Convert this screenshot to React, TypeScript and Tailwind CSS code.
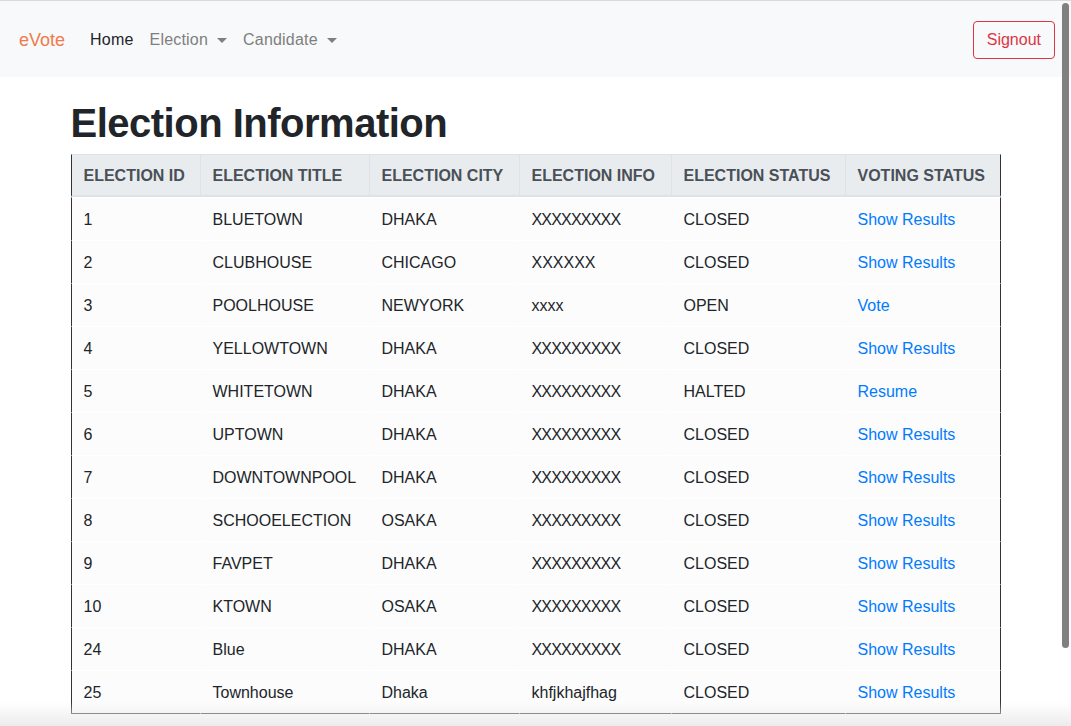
const elections = [
  { id: 1, title: "BLUETOWN", city: "DHAKA", info: "XXXXXXXXX", status: "CLOSED", action: "Show Results" },
  { id: 2, title: "CLUBHOUSE", city: "CHICAGO", info: "XXXXXX", status: "CLOSED", action: "Show Results" },
  { id: 3, title: "POOLHOUSE", city: "NEWYORK", info: "xxxx", status: "OPEN", action: "Vote" },
  { id: 4, title: "YELLOWTOWN", city: "DHAKA", info: "XXXXXXXXX", status: "CLOSED", action: "Show Results" },
  { id: 5, title: "WHITETOWN", city: "DHAKA", info: "XXXXXXXXX", status: "HALTED", action: "Resume" },
  { id: 6, title: "UPTOWN", city: "DHAKA", info: "XXXXXXXXX", status: "CLOSED", action: "Show Results" },
  { id: 7, title: "DOWNTOWNPOOL", city: "DHAKA", info: "XXXXXXXXX", status: "CLOSED", action: "Show Results" },
  { id: 8, title: "SCHOOELECTION", city: "OSAKA", info: "XXXXXXXXX", status: "CLOSED", action: "Show Results" },
  { id: 9, title: "FAVPET", city: "DHAKA", info: "XXXXXXXXX", status: "CLOSED", action: "Show Results" },
  { id: 10, title: "KTOWN", city: "OSAKA", info: "XXXXXXXXX", status: "CLOSED", action: "Show Results" },
  { id: 24, title: "Blue", city: "DHAKA", info: "XXXXXXXXX", status: "CLOSED", action: "Show Results" },
  { id: 25, title: "Townhouse", city: "Dhaka", info: "khfjkhajfhag", status: "CLOSED", action: "Show Results" },
];

const headers = [
  "ELECTION ID",
  "ELECTION TITLE",
  "ELECTION CITY",
  "ELECTION INFO",
  "ELECTION STATUS",
  "VOTING STATUS",
];

function Caret() {
  return (
    <span className="ml-[9px] inline-block h-0 w-0 border-x-[5px] border-t-[5px] border-x-transparent border-t-[#7f7f7f] align-middle" />
  );
}

function Navbar() {
  return (
    <nav className="flex h-[77px] items-center border-t border-[#dadada] bg-[#f8f9fa] pt-[2px] pl-[19px] pr-[16px]">
      <a className="mr-[17px] text-[18px] text-[#ef7a4c]">eVote</a>
      <ul className="flex items-center text-[16px] tracking-[0.2px]">
        <li className="px-2 text-[#212529]">Home</li>
        <li className="px-2 text-[#7f7f7f]">
          Election
          <Caret />
        </li>
        <li className="px-2 text-[#7f7f7f]">
          Candidate
          <Caret />
        </li>
      </ul>
      <button className="ml-auto h-[38px] rounded-[4px] border border-[#dc3545] px-[13px] text-[16px] text-[#dc3545]">
        Signout
      </button>
    </nav>
  );
}

export default function App() {
  return (
    <div className="relative h-[726px] overflow-hidden bg-white font-['Liberation_Sans',Arial,sans-serif] text-[#212529]">
      <Navbar />

      <main className="mx-auto w-[960px] px-[15px]">
        <h1 className="mt-[22px] mb-[7px] text-[40px] leading-[48px] font-bold tracking-[-0.5px]">
          Election Information
        </h1>

        <table className="w-[930px] table-fixed border-separate border-spacing-0 text-[16px]">
          <colgroup>
            <col className="w-[129px]" />
            <col className="w-[169px]" />
            <col className="w-[150px]" />
            <col className="w-[152px]" />
            <col className="w-[174px]" />
            <col className="w-[156px]" />
          </colgroup>
          <thead>
            <tr className="bg-[#e9ecef] text-[#495057]">
              {headers.map((h, i) => (
                <th
                  key={h}
                  className={`border-t border-b-2 border-l border-t-[#dee2e6] border-b-[#dee2e6] px-[12px] pt-[11px] pb-[9px] text-left leading-[20px] font-bold whitespace-nowrap ${
                    i === 0 ? "border-l-[#333]" : "border-l-[#dee2e6]"
                  } ${i === headers.length - 1 ? "border-r border-r-[#333]" : ""}`}
                >
                  {h}
                </th>
              ))}
            </tr>
          </thead>
          <tbody>
            {elections.map((e, r) => {
              const last = r === elections.length - 1;
              const cells = [e.id, e.title, e.city, e.info, e.status];
              return (
                <tr key={e.id} className="bg-[#fcfcfc]">
                  {cells.map((c, i) => (
                    <td
                      key={i}
                      className={`border-t border-l border-t-white px-[12px] pt-[12px] pb-[10px] leading-[20px] whitespace-nowrap ${
                        i === 0 ? "border-l-[#333]" : "border-l-transparent"
                      } ${last ? "border-b border-b-[#333]" : ""} ${
                        i === 3 && c === "XXXXXXXXX" ? "tracking-[-0.8px]" : ""
                      }`}
                    >
                      {c}
                    </td>
                  ))}
                  <td
                    className={`border-t border-r border-l border-t-white border-r-[#333] border-l-transparent px-[12px] pt-[12px] pb-[10px] leading-[20px] whitespace-nowrap text-[#007bff] ${
                      last ? "border-b border-b-[#333]" : ""
                    }`}
                  >
                    <a>{e.action}</a>
                  </td>
                </tr>
              );
            })}
          </tbody>
        </table>
      </main>

      {/* overlay scrollbar thumb */}
      <div className="absolute top-[3px] right-[2px] h-[645px] w-[7px] rounded-full bg-[#808080]" />
      {/* window bottom shadow */}
      <div className="pointer-events-none absolute inset-x-0 bottom-0 h-[24px] bg-linear-to-b from-transparent to-[#ececec]" />
    </div>
  );
}
